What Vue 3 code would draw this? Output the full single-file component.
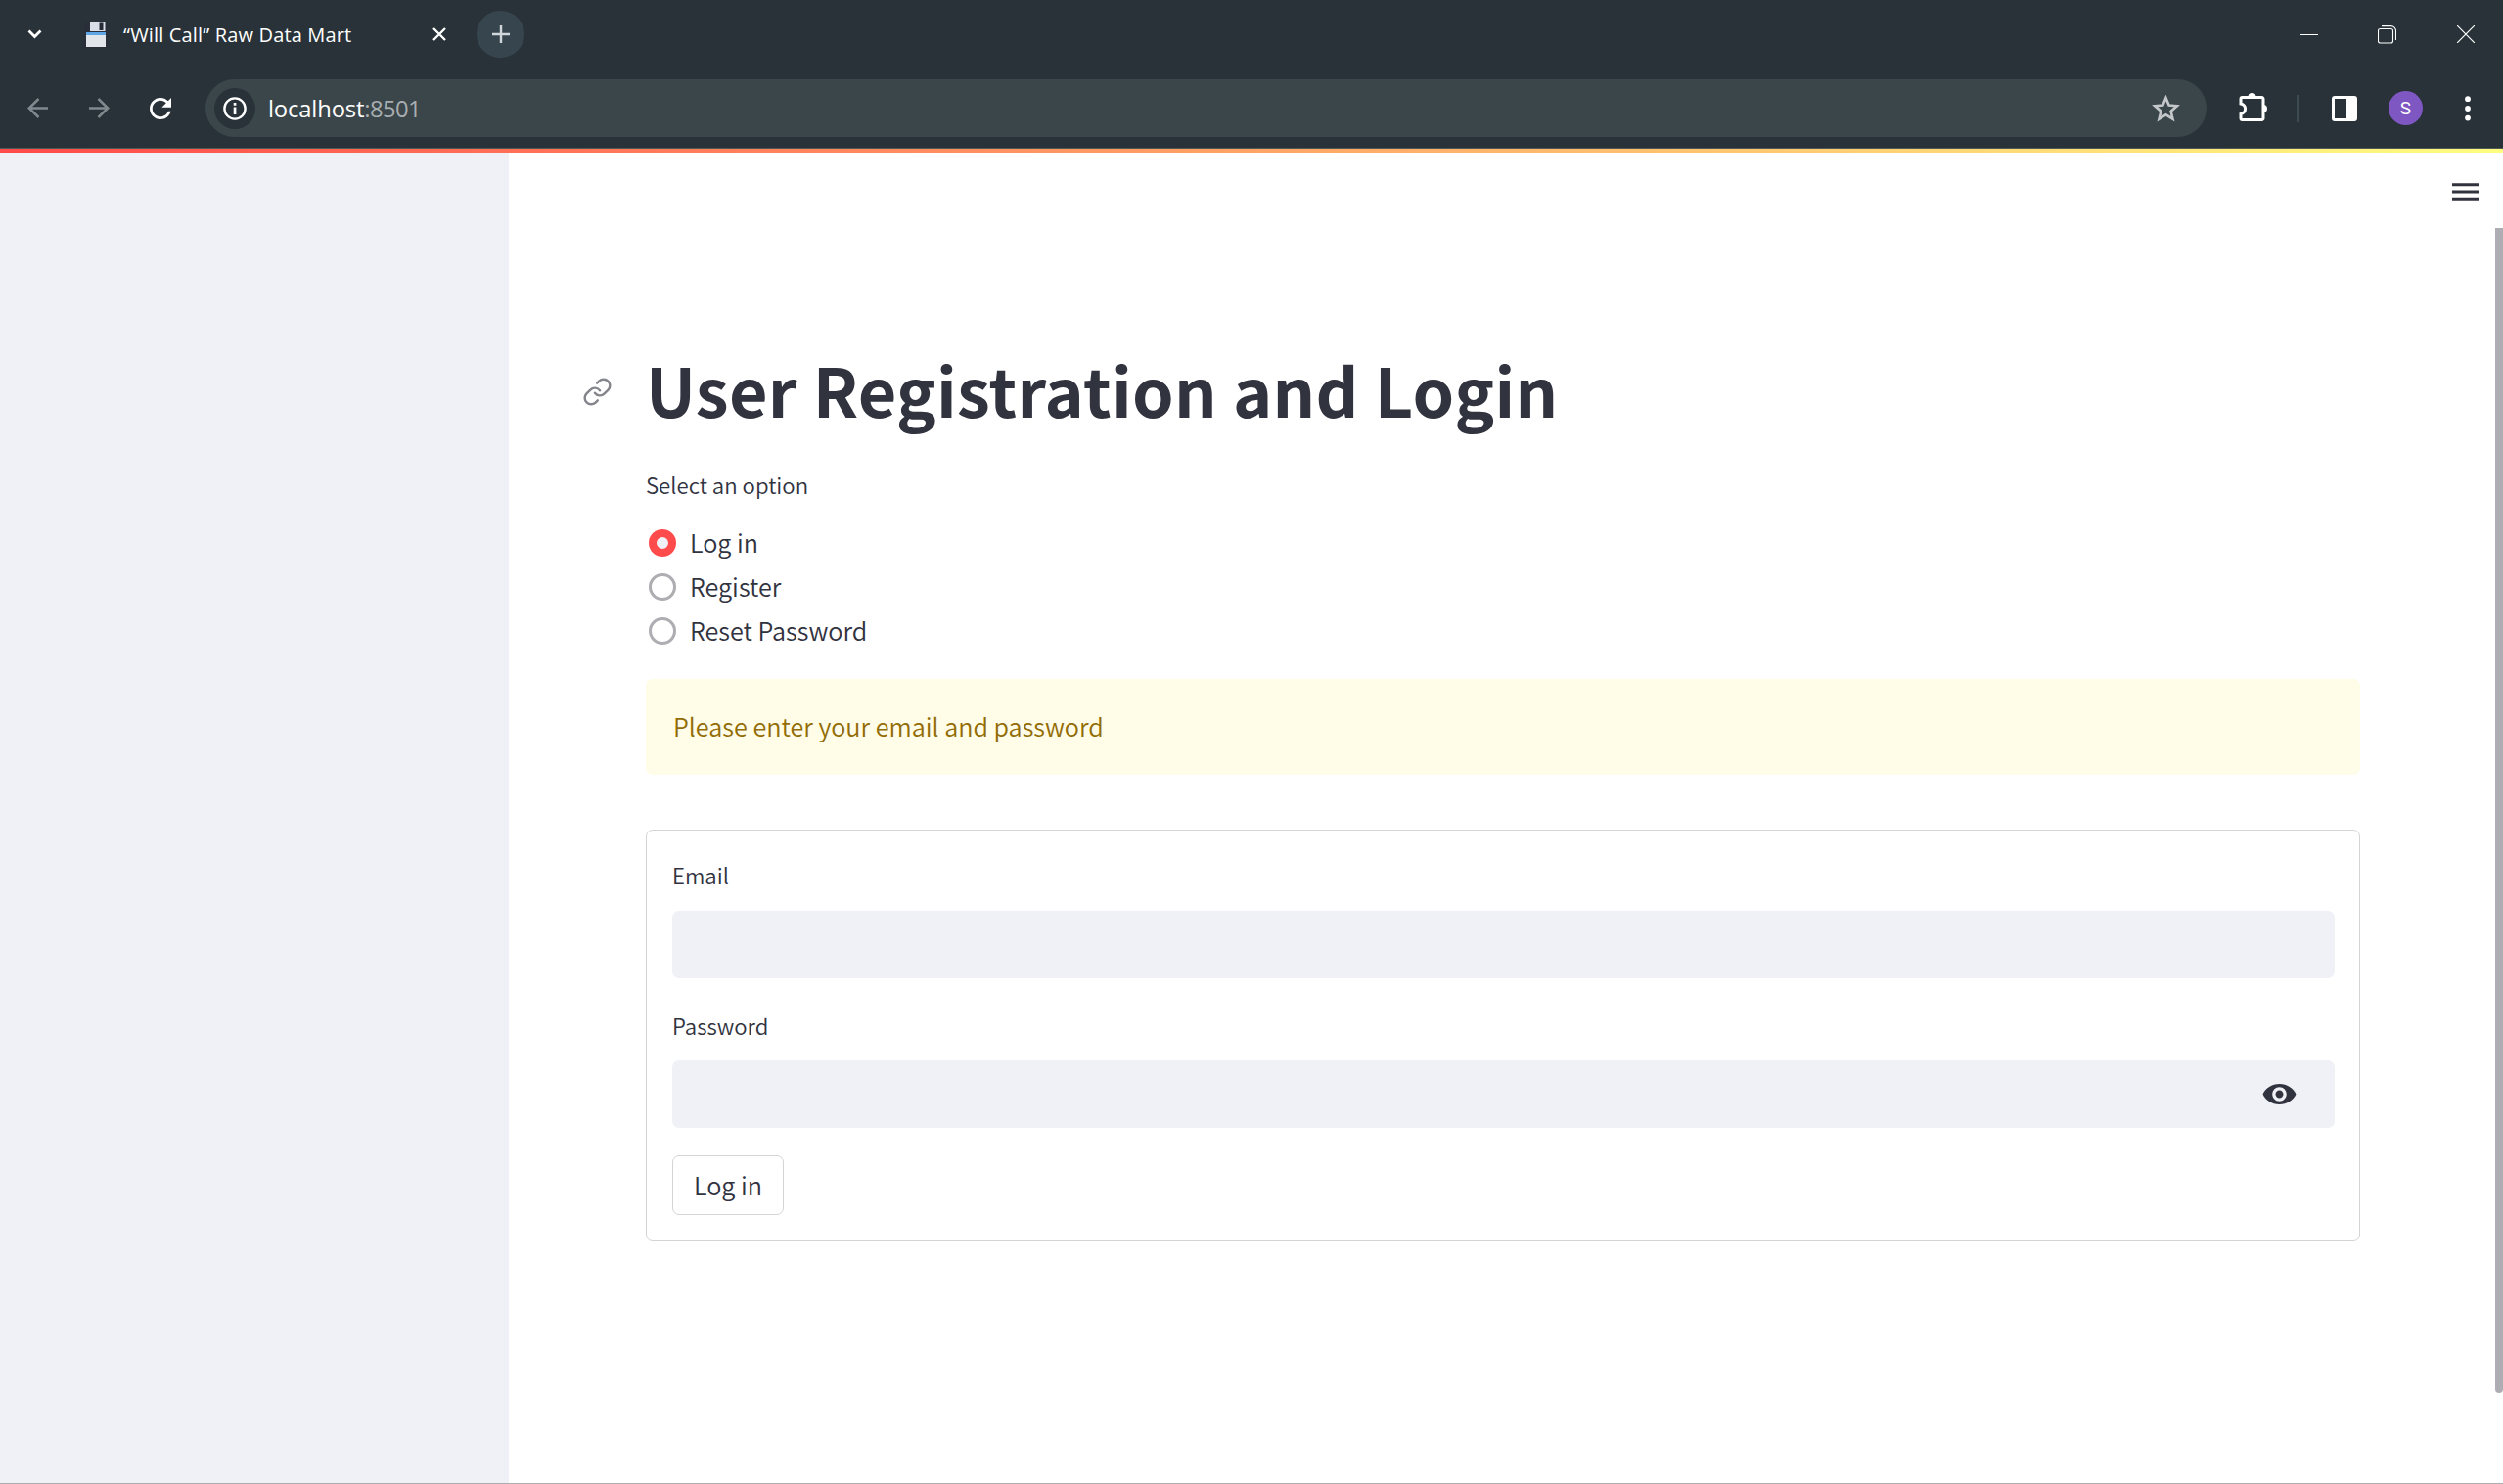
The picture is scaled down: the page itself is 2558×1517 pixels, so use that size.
<script setup>
import { ref } from 'vue'

const options = ['Log in', 'Register', 'Reset Password']
const selected = ref('Log in')
</script>

<template>
  <div class="window">
    <header class="chrome">
      <div class="tabstrip">
        <svg class="chevron" width="15" height="10" viewBox="0 0 15 10"><path d="M1.500 1.500l6 6 6-6" fill="none" stroke="#fff" stroke-width="2.800" /></svg>
        <svg class="floppy" width="24" height="27" viewBox="0 0 24 27">
          <rect x="0" y="0" width="24" height="27" rx="1.500" fill="#2a2e38" />
          <rect x="6" y="0.500" width="15.500" height="9.500" fill="#d9dde8" />
          <rect x="15.500" y="1.500" width="4" height="7.500" fill="#252b36" />
          <rect x="2" y="11" width="20" height="3" fill="#5ea5e8" />
          <rect x="2" y="14" width="20" height="12" fill="#e2e6ea" />
        </svg>
        <span class="tab-title">“Will Call” Raw Data Mart</span>
        <svg class="tab-close" width="14" height="14" viewBox="0 0 14 14"><path d="M1 1l12 12M13 1L1 13" stroke="#fff" stroke-width="2.400" /></svg>
        <span class="new-tab"><svg width="18" height="18" viewBox="0 0 18 18"><path d="M9 0v18M0 9h18" stroke="#d0d6d9" stroke-width="2.400" /></svg></span>
        <span class="spacer"></span>
        <svg class="win-min" width="18" height="18" viewBox="0 0 18 18"><path d="M0 9.500h18" stroke="#fff" /></svg>
        <svg class="win-max" width="19" height="19" viewBox="0 0 19 19"><g fill="none" stroke="#fff" stroke-width="1.100"><rect x="0.500" y="3.500" width="15" height="14.500" rx="2" /><path d="M4 0.600h9.500a5 5 0 0 1 5 5V15" /></g></svg>
        <svg class="win-close" width="18" height="18" viewBox="0 0 18 18"><path d="M0 0l18 18M18 0L0 18" stroke="#fff" stroke-width="1.200" /></svg>
      </div>
      <div class="toolbar">
        <svg class="back" width="21" height="21" viewBox="0 0 21 21"><path d="M11.500 1L1.800 10.500L11.500 20M2 10.500h19" fill="none" stroke="#7f898e" stroke-width="2.500" /></svg>
        <svg class="forward" width="21" height="21" viewBox="0 0 21 21"><path d="M9.500 1l9.700 9.500L9.500 20M19 10.500H0" fill="none" stroke="#7f898e" stroke-width="2.500" /></svg>
        <svg class="reload" width="22" height="22" viewBox="4 4 16 16"><path fill="#fff" d="M17.650 6.350C16.200 4.900 14.210 4 12 4c-4.420 0-7.990 3.580-7.990 8s3.570 8 7.990 8c3.730 0 6.840-2.550 7.730-6h-2.080c-.82 2.330-3.040 4-5.650 4-3.310 0-6-2.690-6-6s2.690-6 6-6c1.660 0 3.140.69 4.220 1.780L13 11h7V4l-2.350 2.350z" /></svg>
        <div class="omnibox">
          <span class="site-info">
            <svg width="24" height="24" viewBox="0 0 24 24"><circle cx="12" cy="12" r="10.600" fill="none" stroke="#fff" stroke-width="2.400" /><path d="M10.700 10.500h2.700v7.500h-2.700zM10.700 6h2.700v2.800h-2.700z" fill="#fff" /></svg>
          </span>
          <span class="url"><span class="host">localhost</span><span class="port">:8501</span></span>
          <svg class="star" width="29" height="28" viewBox="0 0 29 28"><path d="M14.500 3l3.100 7.600 8.200.7-6.200 5.400 1.900 8-7-4.300-7 4.300 1.900-8-6.200-5.400 8.200-.7z" fill="none" stroke="#c4c7c9" stroke-width="2.600" /></svg>
        </div>
        <svg class="puzzle" width="30" height="30" viewBox="0 0 30 30"><path d="M3.500 4.500h20a1.500 1.500 0 0 1 1.500 1.500v20a1.500 1.500 0 0 1-1.500 1.500h-20a1.500 1.500 0 0 1-1.500-1.500v-4.500a5.300 5.300 0 0 0 0-10.500V6a1.500 1.500 0 0 1 1.500-1.500z" fill="none" stroke="#fff" stroke-width="3" /><path d="M9.500 4a4 4 0 0 1 8 0zM25 12a4 4 0 0 1 0 8z" fill="#fff" /></svg>
        <span class="divider"></span>
        <svg class="panel" width="26" height="26" viewBox="0 0 26 26"><rect x="1.500" y="1.500" width="23" height="23" rx="1.500" fill="none" stroke="#fff" stroke-width="3" /><path d="M15 1h10v24H15z" fill="#fff" /></svg>
        <span class="avatar">S</span>
        <svg class="dots" width="6" height="26" viewBox="0 0 6 26"><g fill="#fff"><circle cx="3" cy="3.200" r="2.900" /><circle cx="3" cy="13" r="2.900" /><circle cx="3" cy="22.600" r="2.900" /></g></svg>
      </div>
    </header>
    <div class="decoration"></div>
    <div class="page">
      <aside class="sidebar"></aside>
      <main class="main">
        <svg class="menu" width="27" height="18" viewBox="0 0 27 18"><path d="M0 1.800h27M0 9h27M0 16.200h27" stroke="#31333f" stroke-width="3" /></svg>
        <div class="scrollbar"></div>
        <h1 class="heading">
          <svg class="anchor" width="31" height="31" viewBox="0 0 24 24" fill="none" stroke="#85868c" stroke-width="1.900" stroke-linecap="round"><path d="M10 13a5 5 0 0 0 7.540.540l3-3a5 5 0 0 0-7.070-7.070l-1.720 1.710" /><path d="M14 11a5 5 0 0 0-7.540-.540l-3 3a5 5 0 0 0 7.070 7.070l1.710-1.710" /></svg>
          <span>User Registration and Login</span>
        </h1>
        <div class="label select-label">Select an option</div>
        <div class="radios">
          <label v-for="o in options" :key="o" class="radio" @click="selected = o">
            <span class="knob" :class="{ on: o === selected }"></span>
            <span class="radio-text">{{ o }}</span>
          </label>
        </div>
        <div class="alert">Please enter your email and password</div>
        <form class="form" @submit.prevent>
          <div class="label">Email</div>
          <div class="field email"></div>
          <div class="label pw-label">Password</div>
          <div class="field password">
            <svg width="37" height="37" viewBox="0 0 24 24"><path fill="#31333f" d="M12 5.200C7 5.200 2.730 8 1 12c1.730 4 6 6.800 11 6.800s9.270-2.800 11-6.800c-1.730-4-6-6.800-11-6.800zM12 16.700c-2.600 0-4.700-2.100-4.700-4.700s2.100-4.700 4.700-4.700 4.700 2.100 4.700 4.700-2.100 4.700-4.700 4.700zm0-7.300c-1.440 0-2.600 1.160-2.600 2.600s1.160 2.600 2.600 2.600 2.600-1.160 2.600-2.600-1.160-2.600-2.600-2.600z" /></svg>
          </div>
          <button class="submit" type="button">Log in</button>
        </form>
      </main>
    </div>
  </div>
</template>

<style>
body { margin: 0; overflow: hidden; }
</style>

<style scoped>
* { box-sizing: border-box; }
svg { display: block; flex: none; }
.window { width: 2558px; height: 1517px; display: flex; flex-direction: column; background: #fff; border-bottom: 1px solid #abadae; color: #31333f; font-family: "Noto Sans CJK SC", "Noto Sans", sans-serif; font-weight: 350; overflow: hidden; }
.chrome { height: 152px; background: #283238; border-bottom: 1px solid #515956; flex: none; font-family: "Open Sans", "Noto Sans", sans-serif; font-weight: 400; }
.tabstrip { height: 70px; display: flex; align-items: center; }
.chevron { margin-left: 28px; }
.floppy { margin-left: 43px; }
.tab-title { margin: 2px 0 0 16px; width: 316px; font-size: 20px; letter-spacing: 0.16px; line-height: 30px; color: #fff; white-space: nowrap; }
.new-tab { margin-left: 31px; width: 49px; height: 48px; border-radius: 50%; background: #37464e; display: flex; align-items: center; justify-content: center; }
.spacer { flex: 1; }
.win-max { margin-left: 61px; }
.win-close { margin: 0 29px 0 62px; }
.toolbar { height: 81px; display: flex; align-items: center; }
.back { margin-left: 28px; }
.forward { margin-left: 42px; }
.reload { margin-left: 41px; }
.omnibox { margin-left: 35px; width: 2045px; height: 59px; border-radius: 30px; background: #3b464b; display: flex; align-items: center; }
.site-info { margin-left: 9px; width: 42px; height: 42px; border-radius: 50%; background: #283238; display: flex; align-items: center; justify-content: center; }
.url { margin-left: 13px; flex: 1; font-size: 23.800px; line-height: 40px; color: #fff; white-space: nowrap; }
.host { letter-spacing: -0.150px; }
.port { color: #a9aeb1; letter-spacing: -0.600px; }
.star { margin-right: 27px; }
.puzzle { margin: -2px 0 0 33px; }
.divider { margin-left: 29px; width: 3px; height: 28px; background: #3c4a51; }
.panel { margin-left: 33px; }
.avatar { margin-left: 32px; width: 35px; height: 35px; border-radius: 50%; background: #7e57c2; color: #fff; font: 19px/35px Roboto, sans-serif; text-align: center; }
.dots { margin-left: 43px; }
.decoration { height: 4px; flex: none; background: linear-gradient(90deg, #ff4b4b, #fffd80); }
.page { flex: 1; display: flex; }
.sidebar { width: 520px; background: #f0f1f6; }
.main { flex: 1; position: relative; padding: 202px 146px 0 140px; }
.menu { position: absolute; right: 25px; top: 30.500px; }
.scrollbar { position: absolute; right: 0; top: 77px; width: 8px; height: 1191px; background: #adadb3; border-radius: 0 0 4px 4px; }
.heading { position: relative; margin: 0; font-size: 68.200px; letter-spacing: 0.340px; line-height: 80px; font-weight: 700; white-space: nowrap; }
.anchor { position: absolute; left: -65px; top: 27px; }
.label { font-size: 22.200px; line-height: 34px; height: 34px; }
.select-label { margin-top: 40px; }
.radios { margin-top: 20px; }
.radio { display: flex; height: 45px; }
.knob { margin: 9px 0 0 3px; width: 28px; height: 28px; border-radius: 50%; border: 3px solid #adadb2; }
.knob.on { border: 8.500px solid #ff4b4b; background: #f0f1f6; }
.radio-text { margin-left: 14px; font-size: 25.200px; line-height: 44px; }
.alert { margin-top: 27px; height: 98px; padding-left: 28px; border-radius: 7px; background: #fffce7; color: #926c05; font-size: 25.200px; line-height: 96px; }
.form { margin-top: 56px; height: 421px; border: 1px solid #d3d4d6; border-radius: 7px; padding: 28px 25px 0 26px; }
.field { height: 69px; border-radius: 7px; background: #f0f1f6; }
.email { margin-top: 20px; }
.pw-label { margin-top: 31px; }
.password { margin-top: 19px; display: flex; align-items: center; justify-content: flex-end; padding-right: 38px; }
.submit { margin-top: 28px; width: 114px; height: 61px; padding: 0 0 2px; border: 1px solid #d3d4d6; border-radius: 7px; background: #fff; color: #31333f; font-family: inherit; font-weight: inherit; font-size: 25.200px; line-height: 56px; display: block; }
</style>
